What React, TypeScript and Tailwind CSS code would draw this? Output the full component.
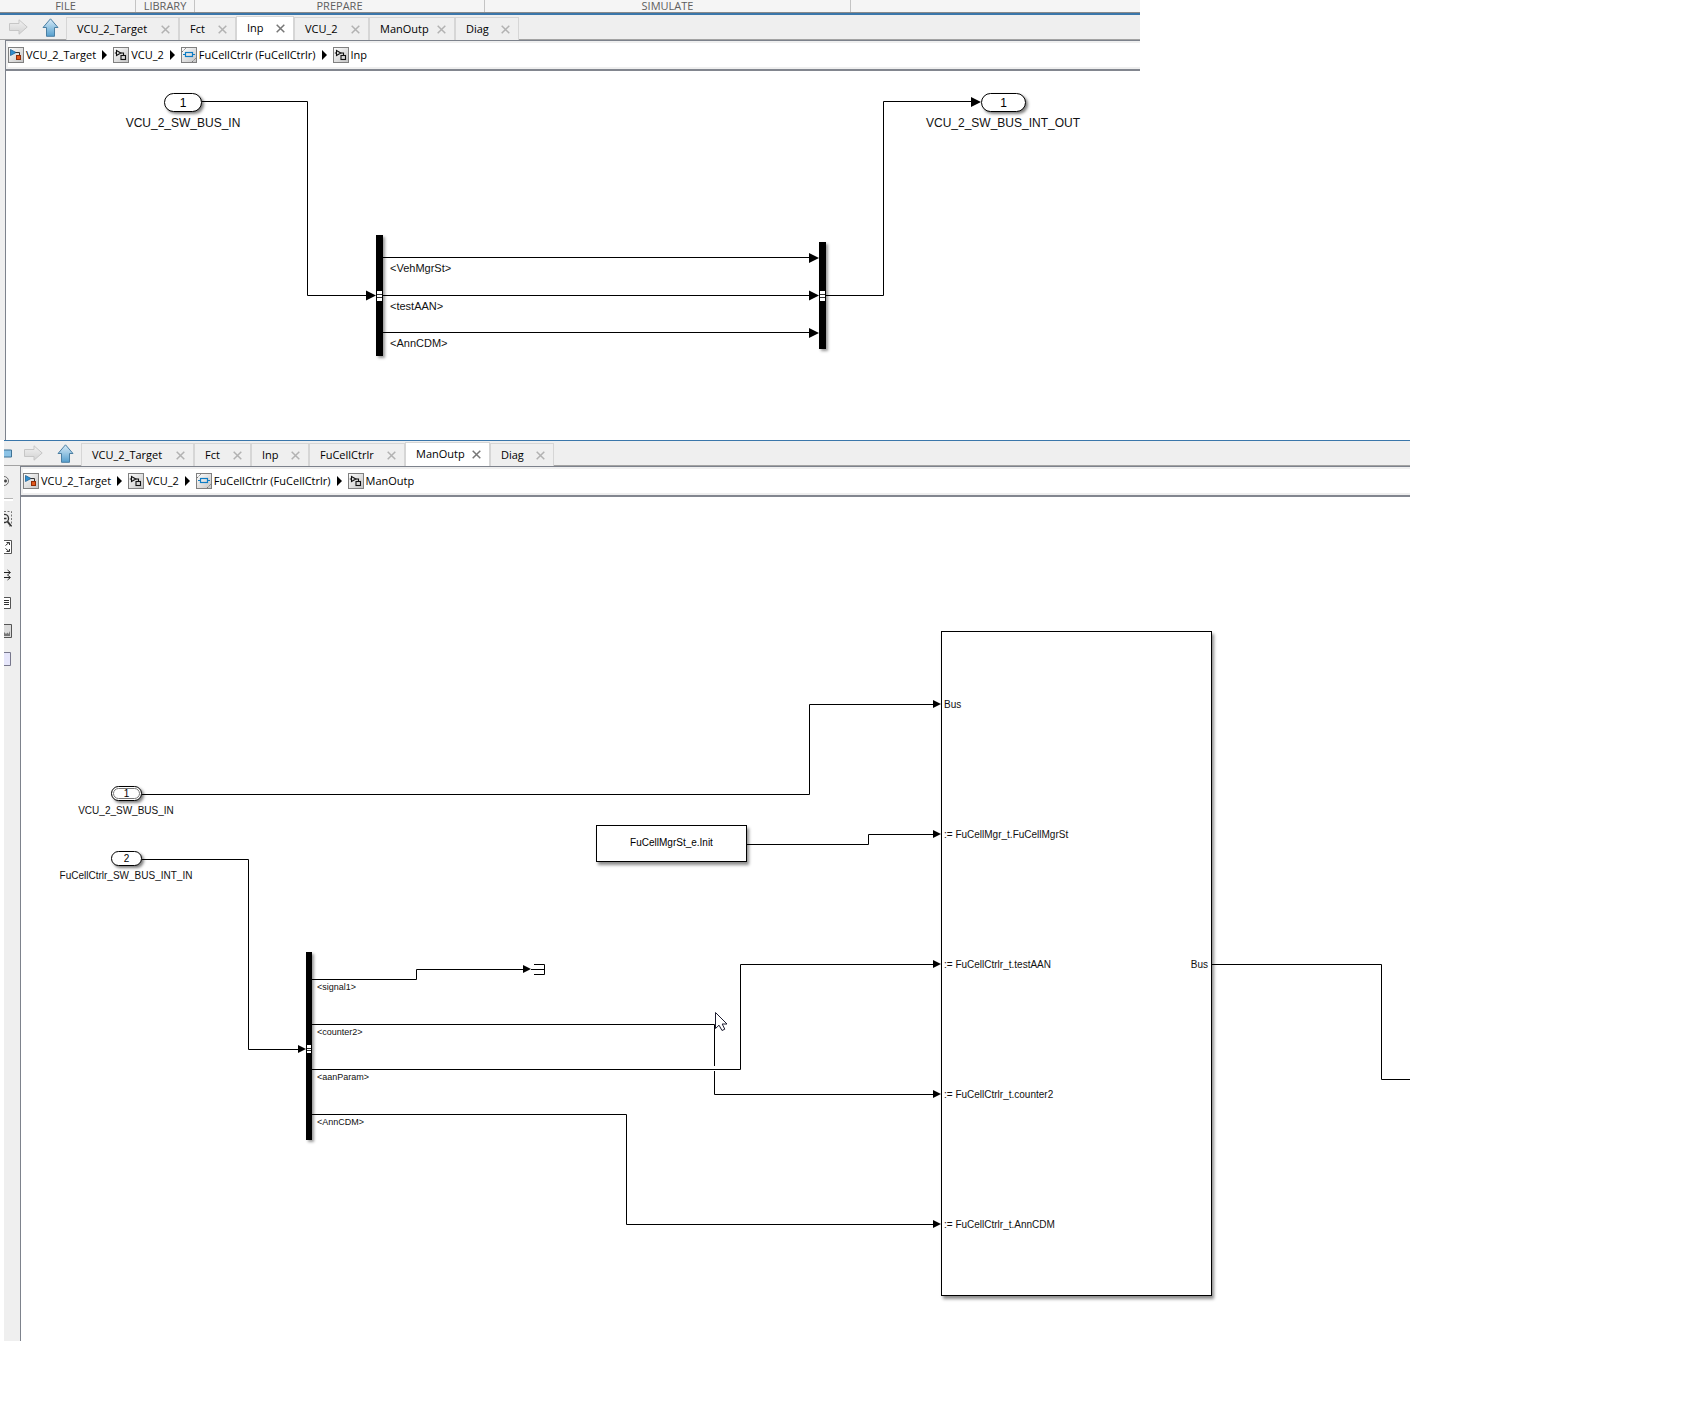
import React from "react";

type Tab = { name: string; width: string; active?: boolean };
type CrumbIcon = "model" | "subsystem" | "chart";
type Crumb = { name: string; icon: CrumbIcon };

const topTabs: Tab[] = [
  { name: "VCU_2_Target", width: "w-[113px]" },
  { name: "Fct", width: "w-[57px]" },
  { name: "Inp", width: "w-[58px]", active: true },
  { name: "VCU_2", width: "w-[75px]" },
  { name: "ManOutp", width: "w-[86px]" },
  { name: "Diag", width: "w-[64px]" },
];

const bottomTabs: Tab[] = [
  { name: "VCU_2_Target", width: "w-[113px]" },
  { name: "Fct", width: "w-[57px]" },
  { name: "Inp", width: "w-[58px]" },
  { name: "FuCellCtrlr", width: "w-[96px]" },
  { name: "ManOutp", width: "w-[85px]", active: true },
  { name: "Diag", width: "w-[64px]" },
];

const baseCrumbs: Crumb[] = [
  { name: "VCU_2_Target", icon: "model" },
  { name: "VCU_2", icon: "subsystem" },
  { name: "FuCellCtrlr (FuCellCtrlr)", icon: "chart" },
];

function ForwardIcon() {
  return (
    <svg width="19" height="16" viewBox="0 0 19 16" aria-hidden="true">
      <defs>
        <linearGradient id="fwd" x1="0" y1="0" x2="0" y2="1">
          <stop offset="0" stopColor="#f2f2f2" />
          <stop offset="1" stopColor="#d2d2d2" />
        </linearGradient>
      </defs>
      <path d="M.5 4.5H10V.8L18.2 8L10 15.2V11.5H.5Z" fill="url(#fwd)" stroke="#c6c6c6" />
    </svg>
  );
}

function UpIcon() {
  return (
    <svg width="17" height="19" viewBox="0 0 17 19" aria-hidden="true">
      <defs>
        <linearGradient id="up" x1="0" y1="0" x2="0" y2="1">
          <stop offset="0" stopColor="#d9ecf8" />
          <stop offset="1" stopColor="#559fcd" />
        </linearGradient>
      </defs>
      <path d="M8.5 .8L16 9.5H12.5V18.3H4.5V9.5H1Z" fill="url(#up)" stroke="#4b7fa3" />
    </svg>
  );
}

function BreadcrumbIcon({ kind }: { kind: CrumbIcon }) {
  return (
    <svg width="16" height="16" viewBox="0 0 16 16" className="shrink-0" aria-hidden="true">
      <defs>
        <linearGradient id={"tile-" + kind} x1="0" y1="0" x2="1" y2="1">
          <stop offset="0" stopColor="#ffffff" />
          <stop offset="1" stopColor="#c4c4c4" />
        </linearGradient>
      </defs>
      <rect x=".5" y=".5" width="15" height="15" fill={"url(#tile-" + kind + ")"} stroke="#808080" />
      {kind === "model" && (
        <g>
          <path d="M2.5 2.5L8 5.5L2.5 8.5Z" fill="#2f8fd0" stroke="#1d5f93" strokeWidth=".8" />
          <path d="M7.5 5.5H11.5V8.5" fill="none" stroke="#333" />
          <rect x="8.5" y="8.5" width="4" height="4" fill="#e2581c" stroke="#8e2c07" />
        </g>
      )}
      {kind === "subsystem" && (
        <g fill="none" stroke="#111" strokeWidth="1.1">
          <path d="M3.5 3.5L7.8 6L3.5 8.5Z" />
          <path d="M1.8 6H3.5M7.8 6H10.5V8.5" />
          <rect x="8" y="8.5" width="4.5" height="4" />
        </g>
      )}
      {kind === "chart" && (
        <g fill="none">
          <rect x="4.5" y="5.5" width="7" height="4" stroke="#0d7cc4" strokeWidth="1.2" />
          <path d="M2 7.5H4.5M11.5 7.5H14" stroke="#0d7cc4" strokeWidth="1.2" />
          <path d="M1 5L5 1M11 15L15 11" stroke="#777" strokeDasharray="1.5 .8" />
        </g>
      )}
    </svg>
  );
}

function TabStrip({ tabs, navClass, children }: { tabs: Tab[]; navClass: string; children?: React.ReactNode }) {
  return (
    <div className="flex h-[25px] items-stretch bg-[#efefef]">
      <div className={"flex items-center border-b border-[#a3a3a3] " + navClass}>
        {children}
        <button aria-label="Forward" className="mr-[14px]">
          <ForwardIcon />
        </button>
        <button aria-label="Up to parent">
          <UpIcon />
        </button>
      </div>
      <div role="tablist" className="flex items-end">
        {tabs.map((t) => (
          <div
            key={t.name}
            className={
              "flex items-center justify-between border-x border-t border-[#d6d6d6] pl-[10px] pr-2 " +
              t.width +
              (t.active ? " h-6 bg-white pb-px" : " h-[23px]")
            }
          >
            <button role="tab" aria-selected={!!t.active} className="text-[11px] leading-4 text-black">
              {t.name}
            </button>
            <button aria-label={"Close " + t.name} className={t.active ? "text-[#777]" : "text-[#b2b2b2]"}>
              <svg width="9" height="9" viewBox="0 0 9 9" aria-hidden="true">
                <path d="M.7 .7L8.3 8.3M8.3 .7L.7 8.3" stroke="currentColor" strokeWidth="1.5" />
              </svg>
            </button>
          </div>
        ))}
      </div>
      <div className="flex-1 border-b border-[#a3a3a3]" />
    </div>
  );
}

function Breadcrumb({ items }: { items: Crumb[] }) {
  return (
    <nav
      aria-label="Breadcrumb"
      className="border-b-2 border-t border-b-[#82868f] border-t-[#7d828c] bg-[#efefef] py-0.5 pl-0.5"
    >
      <ol className="flex h-6 items-center bg-white">
        {items.map((c, i) => (
          <li key={c.name} className="flex items-center">
            {i > 0 && (
              <svg width="5" height="10" viewBox="0 0 5 10" className="mx-1.5" aria-hidden="true">
                <path d="M0 0L5 5L0 10Z" />
              </svg>
            )}
            <a href={"#" + c.icon} className="flex items-center gap-0.5 text-[11px] leading-4 text-black">
              <BreadcrumbIcon kind={c.icon} />
              {c.name}
            </a>
          </li>
        ))}
      </ol>
    </nav>
  );
}

function Port({ n, place, double }: { n: number; place: string; double?: boolean }) {
  return (
    <div
      className={
        "absolute flex items-center justify-center rounded-full border border-black bg-white shadow-[2px_2px_3px_rgba(0,0,0,0.5)] " +
        place
      }
    >
      {double && <span className="absolute inset-px rounded-full border border-[#777]" />}
      <span>{n}</span>
    </div>
  );
}

function Label({ place, children }: { place: string; children: React.ReactNode }) {
  return <div className={"absolute whitespace-nowrap text-[#111] " + place}>{children}</div>;
}

function Bar({ place }: { place: string }) {
  return <div className={"absolute bg-black shadow-[2px_2px_3px_rgba(0,0,0,0.4)] " + place} />;
}

function Block({ place, children }: { place: string; children: React.ReactNode }) {
  return (
    <div className={"absolute border border-black bg-white shadow-[2px_3px_3px_rgba(0,0,0,0.45)] " + place}>
      {children}
    </div>
  );
}

/** Solid arrow head whose tip is at (x, y). */
function Head({ x, y, size = 10 }: { x: number; y: number; size?: number }) {
  const h = size === 10 ? 5 : 4;
  return <path d={`M${x - size} ${y - h}L${x} ${y}L${x - size} ${y + h}Z`} fill="#000" />;
}

function TopDiagram() {
  return (
    <div className="relative h-[369px] overflow-hidden bg-white font-['Liberation_Sans',Arial,sans-serif]">
      <Bar place="left-[370px] top-[164px] h-[121px] w-[7px]" />
      <Bar place="left-[813px] top-[171px] h-[107px] w-[7px]" />
      <svg width="1134" height="369" viewBox="6 71 1134 369" className="absolute left-0 top-0" aria-hidden="true">
        <g fill="none" stroke="#000">
          <path d="M202 101.5H307.5V295.5H368" />
          <path d="M383 257.5H811M383 295.5H811M383 332.5H811" />
          <path d="M826 295.5H883.5V101.5H973" />
        </g>
        <Head x={376} y={295.5} />
        <Head x={819} y={258} />
        <Head x={819} y={295.5} />
        <Head x={819} y={333} />
        <Head x={981} y={102} />
        <rect x="377" y="291" width="5" height="10" fill="#fff" />
        <path d="M377 294.5H382M377 297.5H382" stroke="#333" />
        <rect x="820" y="291" width="5" height="10" fill="#fff" />
        <path d="M820 294.5H825M820 297.5H825" stroke="#333" />
      </svg>
      <Port n={1} place="left-[158px] top-[22px] h-[19px] w-[38px] text-xs leading-4" />
      <Label place="left-[102px] top-[44px] w-[150px] text-center text-xs leading-4">VCU_2_SW_BUS_IN</Label>
      <Port n={1} place="left-[975px] top-[22px] h-[19px] w-[45px] text-xs leading-4" />
      <Label place="left-[897px] top-[44px] w-[200px] text-center text-xs leading-4">VCU_2_SW_BUS_INT_OUT</Label>
      <Label place="left-[384px] top-[189px] text-[11px] leading-4">&lt;VehMgrSt&gt;</Label>
      <Label place="left-[384px] top-[227px] text-[11px] leading-4">&lt;testAAN&gt;</Label>
      <Label place="left-[384px] top-[264px] text-[11px] leading-4">&lt;AnnCDM&gt;</Label>
    </div>
  );
}

function BottomDiagram() {
  return (
    <div className="relative h-[844px] overflow-hidden bg-white font-['Liberation_Sans',Arial,sans-serif]">
      <Bar place="left-[285px] top-[455px] h-[188px] w-[6px]" />
      <Block place="left-[575px] top-[328px] flex h-[37px] w-[151px] items-center justify-center pb-0.5 text-[10px] leading-3">
        FuCellMgrSt_e.Init
      </Block>
      <Block place="left-[920px] top-[134px] h-[665px] w-[271px] text-[10px] leading-3">
        <Label place="left-0.5 top-[67px]">Bus</Label>
        <Label place="left-0.5 top-[197px]">:= FuCellMgr_t.FuCellMgrSt</Label>
        <Label place="left-0.5 top-[327px]">:= FuCellCtrlr_t.testAAN</Label>
        <Label place="left-0.5 top-[457px]">:= FuCellCtrlr_t.counter2</Label>
        <Label place="left-0.5 top-[587px]">:= FuCellCtrlr_t.AnnCDM</Label>
        <Label place="right-[3px] top-[327px]">Bus</Label>
      </Block>
      <svg width="1389" height="844" viewBox="21 497 1389 844" className="absolute left-0 top-0" aria-hidden="true">
        <g fill="none" stroke="#000">
          <path d="M142 794.5H809.5V704.5H935" />
          <path d="M142 859.5H248.5V1049.5H300" />
          <path d="M747 844.5H868.5V834.5H935" />
          <path d="M312 979.5H416.5V969.5H525M531 969.5H544M534 964.5H544.5V974.5H534" />
          <path d="M312 1024.5H714.5V1066M714.5 1071V1094.5H935" />
          <path d="M312 1069.5H740.5V964.5H935" />
          <path d="M312 1114.5H626.5V1224.5H935" />
          <path d="M1212 964.5H1381.5V1079.5H1410" />
        </g>
        <Head x={306} y={1049} size={8} />
        <Head x={531} y={969} size={8} />
        <Head x={941} y={704} size={8} />
        <Head x={941} y={834} size={8} />
        <Head x={941} y={964} size={8} />
        <Head x={941} y={1094} size={8} />
        <Head x={941} y={1224} size={8} />
        <rect x="307" y="1045" width="4" height="8" fill="#fff" />
        <path d="M307 1048.5H311M307 1050.5H311" stroke="#222" />
        <path
          d="M715.5 1012.5V1028.5L719 1025.2L722 1030.5L724.8 1029.2L722.2 1024H727Z"
          fill="#fff"
          stroke="#1c1c30"
        />
      </svg>
      <Port n={1} double place="left-[90px] top-[289px] h-[15px] w-[31px] text-[10px] leading-3" />
      <Label place="left-[30px] top-[308px] w-[150px] text-center text-[10px] leading-3">VCU_2_SW_BUS_IN</Label>
      <Port n={2} place="left-[90px] top-[354px] h-[15px] w-[31px] text-[10px] leading-3" />
      <Label place="left-[30px] top-[373px] w-[150px] text-center text-[10px] leading-3">
        FuCellCtrlr_SW_BUS_INT_IN
      </Label>
      <Label place="left-[296px] top-[484px] text-[9px] leading-3">&lt;signal1&gt;</Label>
      <Label place="left-[296px] top-[529px] text-[9px] leading-3">&lt;counter2&gt;</Label>
      <Label place="left-[296px] top-[574px] text-[9px] leading-3">&lt;aanParam&gt;</Label>
      <Label place="left-[296px] top-[619px] text-[9px] leading-3">&lt;AnnCDM&gt;</Label>
    </div>
  );
}

function ToolIcon({ label, children }: { label: string; children: React.ReactNode }) {
  return (
    <button aria-label={label} className="block h-7 w-2.5">
      <svg width="9" height="28" viewBox="0 0 9 28" fill="none" aria-hidden="true">
        {children}
      </svg>
    </button>
  );
}

function Palette() {
  return (
    <div role="toolbar" aria-label="Palette" className="flex w-4 shrink-0 flex-col bg-[#efefef]">
      <ToolIcon label="Hide browser">
        <path d="M0 10.5A4.5 4.5 0 0 1 0 19.5" stroke="#6b6b6b" />
        <path d="M0 15H3M1.5 13.5V16.5" stroke="#444" strokeWidth="1.6" />
      </ToolIcon>
      <div className="my-1 h-[3px] w-[9px] border-t border-[#b5b5b5] bg-white" />
      <ToolIcon label="Zoom">
        <path d="M0 6.5H7.5V21.5H5" stroke="#777" strokeDasharray="2 1.5" />
        <path d="M0 9.5A4 4 0 0 1 1 17.5H0M0 13.5H2.5" stroke="#333" strokeWidth="1.3" />
        <path d="M3.5 16.5L7 21" stroke="#333" strokeWidth="2" />
      </ToolIcon>
      <ToolIcon label="Fit to view">
        <path d="M0 7.5H7.5V20.5H0" fill="#fff" stroke="#555" />
        <path d="M1.5 12.5L5 9.5M2.5 9.5H5.5V12M1.5 15.5L5 18.5M2.5 18.5H5.5V16" stroke="#333" />
      </ToolIcon>
      <ToolIcon label="Sample time">
        <path d="M0 11.5H6M0 16.5H6" stroke="#222" strokeWidth="1.2" />
        <path d="M3.5 9L6.5 11.5L3.5 14M3.5 14L6.5 16.5L3.5 19" stroke="#333" />
      </ToolIcon>
      <ToolIcon label="Annotation">
        <path d="M0 8.5H6.5V19.5H0" fill="#fff" stroke="#555" />
        <path d="M0 11.5H5M0 13.5H5M0 15.5H5" stroke="#333" />
      </ToolIcon>
      <ToolIcon label="Image">
        <path d="M0 7.5H7.5V20.5H0" fill="#dcdcdc" stroke="#555" />
        <path d="M0 15L2 17L3.5 15.5L4.5 17L6 14V19H0Z" fill="#777" />
      </ToolIcon>
      <ToolIcon label="Area">
        <path d="M0 7.5H6.5V20.5H0" fill="#e6e6fa" stroke="#77778c" />
      </ToolIcon>
    </div>
  );
}

function RibbonSection({ name, width }: { name: string; width: string }) {
  return (
    <div className={"flex h-3 justify-center border-r border-[#c4c4c4] " + width}>
      <span className="text-[11px] leading-3">{name}</span>
    </div>
  );
}

export default function App() {
  return (
    <main className="min-h-screen bg-white font-['Open_Sans','Noto_Sans',sans-serif] text-black">
      <section aria-label="Inp" className="mr-[544px]">
        <header className="flex border-b-2 border-[#3a76aa] bg-[#f5f5f5] text-[#5e5e5e]">
          <div className="flex flex-1 border-b border-[#8a8a8a]">
            <RibbonSection name="FILE" width="w-[136px] pr-1" />
            <RibbonSection name="LIBRARY" width="w-[59px]" />
            <RibbonSection name="PREPARE" width="w-[290px]" />
            <RibbonSection name="SIMULATE" width="w-[366px]" />
          </div>
        </header>
        <TabStrip tabs={topTabs} navClass="w-[66px] pl-[9px]" />
        <div className="flex">
          <div className="w-[5px] shrink-0 bg-[#efefef]" />
          <div className="min-w-0 flex-1 border-l border-[#7d828c]">
            <Breadcrumb items={[...baseCrumbs, { name: "Inp", icon: "subsystem" }]} />
            <TopDiagram />
          </div>
        </div>
      </section>
      <section aria-label="ManOutp" className="ml-1 mr-[274px] border-t border-[#3a76aa]">
        <TabStrip tabs={bottomTabs} navClass="w-[77px]">
          <button aria-label="Back" className="mr-3">
            <svg width="8" height="9" viewBox="0 0 8 9" aria-hidden="true">
              <path d="M0 1H7.5V8H0" fill="#8cc3e6" stroke="#3f7396" />
            </svg>
          </button>
        </TabStrip>
        <div className="flex">
          <Palette />
          <div className="min-w-0 flex-1 border-l border-[#7d828c]">
            <Breadcrumb items={[...baseCrumbs, { name: "ManOutp", icon: "subsystem" }]} />
            <BottomDiagram />
          </div>
        </div>
      </section>
    </main>
  );
}
